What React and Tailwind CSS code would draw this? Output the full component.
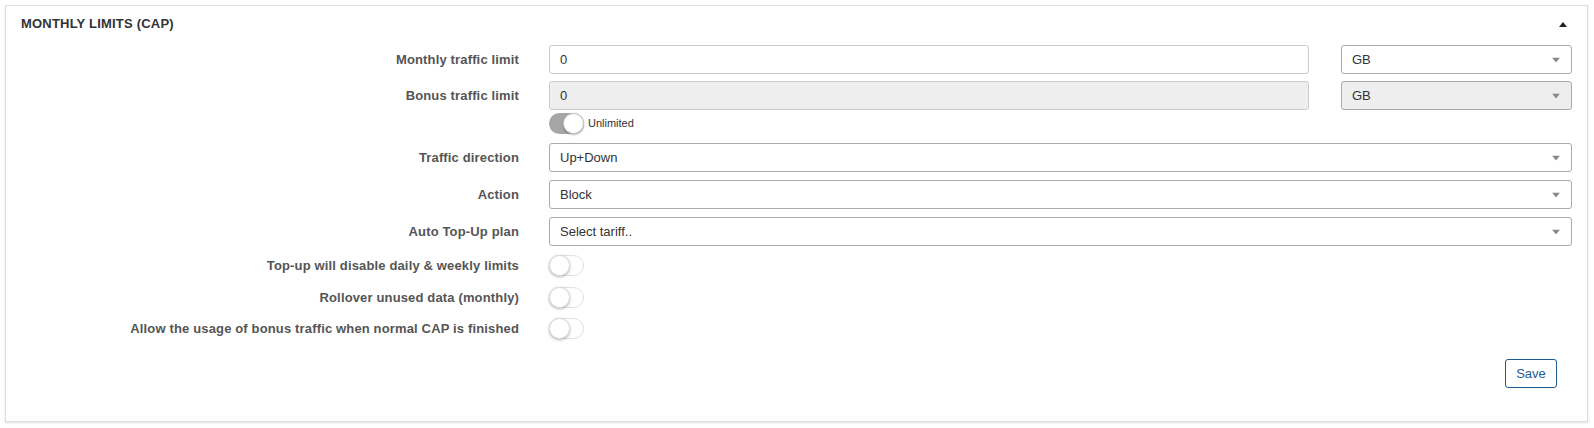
import React from 'react';

const font = { fontFamily: '"Liberation Sans", Arial, sans-serif' };

function Caret() {
  return (
    <svg width="8" height="5" viewBox="0 0 8 5" className="absolute right-[11px] top-1/2 -translate-y-1/2">
      <path d="M0 0 L8 0 L4 5 Z" fill="#888" />
    </svg>
  );
}

function Select({ value, disabled, className = '' }) {
  return (
    <div
      className={`relative flex h-[29px] items-center rounded-[3px] border border-[#aaa] pl-[10px] text-[13px] text-[#333] ${
        disabled ? 'bg-[#eee]' : 'bg-white'
      } ${className}`}
    >
      {value}
      <Caret />
    </div>
  );
}

function Input({ value, disabled, className = '' }) {
  return (
    <div
      className={`flex h-[29px] items-center rounded-[3px] border border-[#ccc] pl-[10px] text-[13px] text-[#333] ${
        disabled ? 'bg-[#eee]' : 'bg-white'
      } ${className}`}
    >
      {value}
    </div>
  );
}

function Toggle({ on }) {
  return on ? (
    <div className="relative h-[21px] w-[35px] rounded-full bg-[#a6a6a6]">
      <div className="absolute right-0 top-0 h-[21px] w-[21px] rounded-full border border-[#ccc] bg-white shadow-[0_1px_2px_rgba(0,0,0,0.3)]" />
    </div>
  ) : (
    <div className="relative h-[21px] w-[35px] rounded-full border border-[#dfdfdf] bg-white">
      <div className="absolute -left-px -top-px h-[21px] w-[21px] rounded-full border border-[#ddd] bg-white shadow-[0_1px_3px_rgba(0,0,0,0.3)]" />
    </div>
  );
}

function Row({ label, children, className = '' }) {
  return (
    <div className={`flex items-center ${className}`}>
      <div className="w-[513px] shrink-0 text-right text-[13px] font-bold tracking-[0.15px] text-[#555]">{label}</div>
      <div className="ml-[30px] flex flex-1 items-center">{children}</div>
    </div>
  );
}

export default function App() {
  return (
    <div className="min-h-[428px] bg-white p-[5px] pr-[6px]" style={font}>
      <div className="h-[417px] border border-[#ddd] bg-white shadow-[0_1px_2px_rgba(0,0,0,0.12)]">
        <div className="flex h-[36px] items-center justify-between pl-[15px] pr-[20px]">
          <span className="text-[13px] font-bold tracking-[0.2px] text-[#333]">MONTHLY LIMITS (CAP)</span>
          <svg width="8" height="5" viewBox="0 0 8 5">
            <path d="M0 5 L8 5 L4 0 Z" fill="#222" />
          </svg>
        </div>

        <div className="mt-[3px] pr-[15px]">
          <Row label="Monthly traffic limit">
            <Input value="0" className="w-[760px]" />
            <Select value="GB" className="ml-[32px] flex-1" />
          </Row>
          <Row label="Bonus traffic limit" className="mt-[7px]">
            <Input value="0" disabled className="w-[760px]" />
            <Select value="GB" disabled className="ml-[32px] flex-1" />
          </Row>
          <div className="mt-[3px] flex items-center pl-[543px]">
            <Toggle on />
            <span className="ml-[4px] text-[11px] text-[#333]">Unlimited</span>
          </div>
          <Row label="Traffic direction" className="mt-[9px]">
            <Select value="Up+Down" className="flex-1" />
          </Row>
          <Row label="Action" className="mt-[8px]">
            <Select value="Block" className="flex-1" />
          </Row>
          <Row label="Auto Top-Up plan" className="mt-[8px]">
            <Select value="Select tariff.." className="flex-1" />
          </Row>
          <Row label="Top-up will disable daily & weekly limits" className="mt-[9px]">
            <Toggle />
          </Row>
          <Row label="Rollover unused data (monthly)" className="mt-[11px]">
            <Toggle />
          </Row>
          <Row label="Allow the usage of bonus traffic when normal CAP is finished" className="mt-[10px]">
            <Toggle />
          </Row>
          <div className="mt-[20px] flex justify-end pr-[15px]">
            <button className="h-[29px] w-[52px] rounded-[3px] border border-[#1d5b93] bg-white text-[13px] text-[#1d5b93]">
              Save
            </button>
          </div>
        </div>
      </div>
    </div>
  );
}
